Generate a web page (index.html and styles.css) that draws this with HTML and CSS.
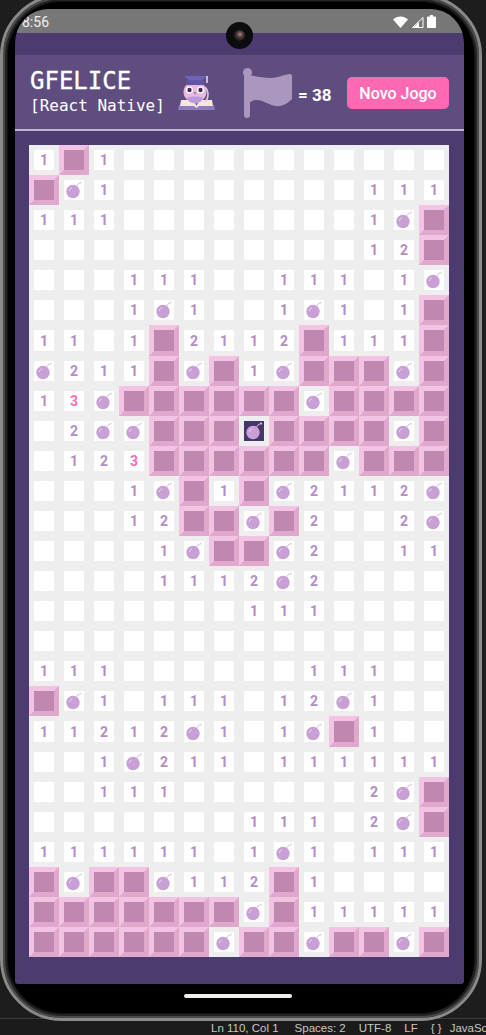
FILE: index.html
```html
<!DOCTYPE html>
<html lang="pt-BR">
<head>
	<meta charset="UTF-8">
	<title>Campo Minado</title>
	<link rel="stylesheet" href="styles.css">
</head>
<body>
	<svg class="defs" width="0" height="0">
		<symbol id="bomb" viewBox="0 0 20 20">
			<path d="M12.500 7 C13 4.500 14.500 3 16.500 3" fill="none" stroke="#d9bde2" stroke-width="1"/>
			<circle cx="17" cy="2.500" r="1" fill="#e6d3ec"/>
			<circle cx="9" cy="11.500" r="6.700" fill="#c9a0d6"/>
			<path d="M5.300 11 C5.500 9.300 6.500 8.200 8.100 7.800" fill="none" stroke="#e7d6ee" stroke-width="1"/>
		</symbol>
	</svg>
	<div class="phone">
		<div class="camera"><span class="lens"></span></div>
		<div class="screen">
			<div class="status">
				<span class="time">8:56</span>
				<div class="status-icons">
					<svg width="15" height="12" viewBox="0 0 15 12"><path d="M0 3.500 C4 -0.600 11 -0.600 15 3.500 L7.500 12 Z" fill="#fff"/></svg>
					<svg width="13" height="12" viewBox="0 0 13 12"><path d="M12 1.500 V11.500 H1.500 Z" fill="none" stroke="#fff" stroke-width="1"/><path d="M8 6 V11.500 H2.500 Z" fill="#fff"/></svg>
					<svg width="9" height="13" viewBox="0 0 9 13"><path d="M3 0 H6 V1.500 H8 C8.600 1.500 9 1.900 9 2.500 V12 C9 12.600 8.600 13 8 13 H1 C.4 13 0 12.600 0 12 V2.500 C0 1.900 .4 1.500 1 1.500 H3 Z" fill="#fff"/></svg>
				</div>
			</div>
			<div class="header">
				<div class="brand">
					<div class="brand-name">GFELICE</div>
					<div class="brand-sub">[React Native]</div>
				</div>
				<svg class="owl" width="37" height="38" viewBox="0 0 37 38">
					<path d="M1 31 H17 L18.500 34 L20 31 H36 L37 36 H0 Z" fill="#8d7cc0"/>
					<path d="M3 26 H16 L18.500 32 L21 26 H34 L35 32 H21 L18.500 34 L16 32 H2 Z" fill="#f6e6dc"/>
					<path d="M27 13 C31 17 31 24 27 28" fill="none" stroke="#d8cfe6" stroke-width="1.500"/>
					<ellipse cx="17" cy="18" rx="11.500" ry="10.500" fill="#eab8de"/>
					<path d="M9 24 C11 31 23 31 25 24 C22 22 12 22 9 24 Z" fill="#b99adf"/>
					<path d="M8 11 H26 L25 5 H9 Z" fill="#5f55a6"/>
					<path d="M6 2 H30 L24 6 H11 Z" fill="#6d63b8"/>
					<path d="M29 2 V9" stroke="#e8e0f0" stroke-width="1.500"/>
					<circle cx="11.500" cy="16" r="3.600" fill="#fff"/>
					<circle cx="22.500" cy="16" r="3.600" fill="#fff"/>
					<circle cx="11.500" cy="16" r="2.200" fill="#3a2b50"/>
					<circle cx="22.500" cy="16" r="2.200" fill="#3a2b50"/>
					<path d="M15.500 18 H18.500 L17 21 Z" fill="#a876b8"/>
				</svg>
				<svg class="flag" width="50" height="50" viewBox="0 0 50 50">
					<circle cx="4.500" cy="4.500" r="4.500" fill="#ab97bd"/>
					<rect x="1" y="4" width="6" height="46" rx="3" fill="#ab97bd"/>
					<path d="M2 7 C10 7 18 10 27 10 C35 10 42 6 47 6 C48.500 6 49 7 49 8 V31 C44 36 38 39 33 38 C26 37 20 32 14 32 C11 32 8 33 6 35 Z" fill="#ab97bd"/>
				</svg>
				<span class="count">= 38</span>
				<button class="new-game">Novo Jogo</button>
			</div>
			<div class="rule"></div>
			<div class="board" id="board"></div>
		</div>
		<div class="home"></div>
	</div>
	<div class="editor-bar">
		<span class="pos">Ln 110, Col 1</span>
		<span>Spaces: 2</span>
		<span>UTF-8</span>
		<span>LF</span>
		<span>{ }</span>
		<span class="lang">JavaSc</span>
	</div>
	<script src="script.js"></script>
</body>
</html>
```

FILE: styles.css
```css
html,body{
	margin: 0;
	padding: 0;
}
body{
	width: 486px;
	height: 1035px;
	overflow: hidden;
	background: linear-gradient(#1d1d1d 1018px, #3a3a3a 1018px, #3a3a3a 1019px, #1b1b1b 1019px);
}
.defs{
	display: block;
	height: 0;
}
.phone{
	position: relative;
	width: 482px;
	height: 1027px;
	margin-top: -6px;
	padding: 12px 15px 0 12px;
	box-sizing: border-box;
	border: 3px solid #8a8a8a;
	border-radius: 62px;
	background: #000;
	box-shadow: inset 0 0 0 2px #4a4a4a, inset 0 0 0 4px #222, inset 0 0 0 5px #111;
}
.camera{
	position: absolute;
	top: 25px;
	left: 223px;
	width: 27px;
	height: 27px;
	border-radius: 50%;
	background: #0c0c0e;
	display: flex;
	align-items: center;
	justify-content: center;
	z-index: 2;
}
.lens{
	width: 11px;
	height: 11px;
	border-radius: 50%;
	background: radial-gradient(circle at 55% 40%, #b77fa0 0, #4a3b33 35%, #1a1a1e 70%);
}
.screen{
	width: 449px;
	height: 975px;
	overflow: hidden;
	border-radius: 34px 34px 3px 3px;
	background: #4b3b6e;
}
.status{
	height: 24px;
	padding: 1px 28px 0 7px;
	box-sizing: border-box;
	background: #777;
	display: flex;
	align-items: center;
	justify-content: space-between;
}
.time{
	font: 14px Roboto, sans-serif;
	color: #f0f0f0;
}
.status-icons{
	display: flex;
	align-items: center;
	gap: 3px;
}
.header{
	height: 74px;
	margin-top: 22px;
	padding: 0 15px;
	box-sizing: border-box;
	background: #5f4d80;
	display: flex;
	align-items: center;
}
.brand{
	width: 135px;
	color: #fff;
	font-family: "DejaVu Sans Mono", monospace;
	white-space: nowrap;
}
.brand-name{
	font-size: 24px;
	line-height: 28px;
	-webkit-text-stroke: 0.3px #fff;
}
.brand-sub{
	font-size: 16px;
	line-height: 22px;
}
.owl{
	margin-left: 13px;
	margin-top: 2px;
}
.flag{
	margin-left: 28px;
	margin-top: 1px;
}
.count{
	margin-left: 5px;
	margin-top: 5px;
	font: bold 17px Roboto, sans-serif;
	color: #fff;
}
.new-game{
	margin-left: auto;
	margin-top: 2px;
	width: 102px;
	height: 32px;
	padding: 0;
	border: none;
	border-radius: 5px;
	background: #ff69b4;
	color: #fff;
	font: 500 16px Roboto, sans-serif;
}
.rule{
	height: 2px;
	background: #bfb4d2;
}
.board{
	margin: 14px 0 0 14px;
	width: 420px;
	display: grid;
	grid-template-columns: repeat(14, 30px);
	grid-auto-rows: 30.08px;
	background: #eee;
}
.cell{
	border: 5px solid #eee;
	box-sizing: border-box;
	background: #fff;
	display: flex;
	align-items: center;
	justify-content: center;
	font: bold 14px Roboto, sans-serif;
	color: #b48dc6;
}
.cell svg{
	display: block;
	width: 20px;
	height: 20px;
}
.cell.pink{
	color: #ff69b4;
}
.cell.flagged{
	border-color: #f2c3e3 #dfa8cc #dfa8cc #f2c3e3;
	background: #c088b0;
}
.cell.exploded{
	background: #45356a;
}
.home{
	width: 108px;
	height: 4px;
	margin: 10px auto 0;
	border-radius: 2px;
	background: #eee;
	transform: translateX(-2px);
}
.editor-bar{
	height: 14px;
	padding-left: 211px;
	display: flex;
	gap: 13px;
	white-space: nowrap;
	font: 11.5px/14px "Liberation Sans", Arial, sans-serif;
	color: #c8c8c8;
}
.pos{
	margin-right: 3px;
}
.lang{
	margin-left: -5px;
}
```

FILE: script.js
```js
var rows=[
	'1F1...........',
	'FB1........111',
	'111........1BF',
	'...........12F',
	'...111..111.1B',
	'...1B1..1B1.1F',
	'11.1F2112F111F',
	'B211FBF1BFFFBF',
	'13BFFFFFFBFFFF',
	'.2BBFFFXFFFFBF',
	'.123FFFFFFBFFF',
	'...1BF1FB2112B',
	'...12FFBF2..2B',
	'....1BFFB2..11',
	'....1112B2....',
	'.......111....',
	'..............',
	'111......111..',
	'FB1.111.12B1..',
	'11212B1.1BF1..',
	'..1B211.111111',
	'..111......2BF',
	'.......111.2BF',
	'111111.1B1.111',
	'FBFFB112F1....',
	'FFFFFFFBF11111',
	'FFFFFFBFFBFFBF'
];
var oBoard=document.getElementById('board');
var html='';
var bomb='<svg><use href="#bomb"></use></svg>';
for (var i = 0; i < rows.length; i++) {
	for (var j = 0; j < rows[i].length; j++) {
		var c=rows[i][j];
		if(c == 'F'){
			html+='<div class="cell flagged"></div>';
		}else if(c == 'B'){
			html+='<div class="cell">'+bomb+'</div>';
		}else if(c == 'X'){
			html+='<div class="cell exploded">'+bomb+'</div>';
		}else if(c == '.'){
			html+='<div class="cell"></div>';
		}else{
			html+='<div class="cell'+(c == '3' ? ' pink' : '')+'">'+c+'</div>';
		}
	}
}
oBoard.innerHTML=html;
```
